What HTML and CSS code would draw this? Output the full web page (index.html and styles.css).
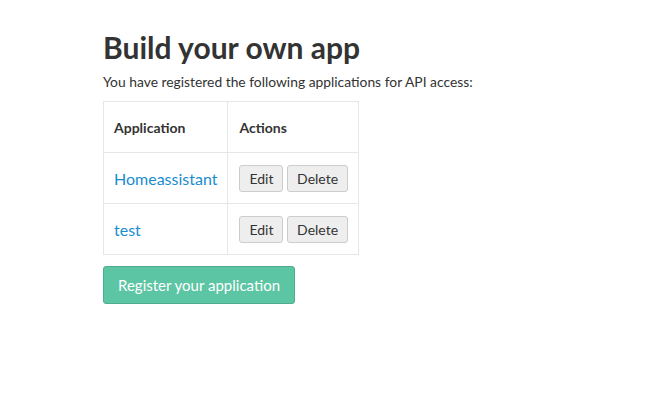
FILE: index.html
```html
<!DOCTYPE html>
<html lang="en">
<head>
    <meta charset="UTF-8">
    <title>Build your own app</title>
    <link rel="stylesheet" href="styles.css">
</head>
<body>
<div class="wrap">
    <h1>Build your own app</h1>
    <p>You have registered the following applications for API access:</p>
    <table class="apps">
        <thead>
            <tr>
                <th>Application</th>
                <th>Actions</th>
            </tr>
        </thead>
        <tbody>
            <tr>
                <td><a href="#">Homeassistant</a></td>
                <td>
                    <button class="btn">Edit</button>
                    <button class="btn">Delete</button>
                </td>
            </tr>
            <tr>
                <td><a href="#">test</a></td>
                <td>
                    <button class="btn">Edit</button>
                    <button class="btn">Delete</button>
                </td>
            </tr>
        </tbody>
    </table>
    <button class="btn-register">Register your application</button>
</div>
</body>
</html>
```

FILE: styles.css
```css
body {
    margin: 0;
    font-family: Lato, "Open Sans", sans-serif;
    color: #333;
    background: #fff;
}

.wrap {
    padding: 27px 0 0 103px;
}

h1 {
    margin: 0;
    font-size: 30px;
    font-weight: 700;
    line-height: 40px;
}

p {
    margin: 5px 0 9px;
    font-size: 13.85px;
    line-height: 20px;
}

.apps {
    border-collapse: collapse;
    border: 1px solid #e6e6e6;
    margin-bottom: 11px;
}

.apps th,
.apps td {
    border: 1px solid #e6e6e6;
    padding: 0 10px;
    height: 50px;
    text-align: left;
    font-size: 14px;
}

.apps td:last-child,
.apps th:last-child {
    padding-left: 11px;
}

.apps th {
    font-weight: 700;
}

.apps a {
    color: #1a8dd0;
    text-decoration: none;
    font-size: 16px;
}

.btn {
    font-family: inherit;
    font-size: 14px;
    color: #333;
    background: #eee;
    border: 1px solid #ccc;
    border-radius: 3px;
    padding: 0 9px;
    height: 27px;
    cursor: pointer;
}

.btn-register {
    font-family: inherit;
    font-size: 15px;
    color: #fff;
    background: #5cc5a3;
    border: 1px solid #4fad8e;
    border-radius: 3px;
    height: 38px;
    padding: 0 14px;
    cursor: pointer;
}
```
